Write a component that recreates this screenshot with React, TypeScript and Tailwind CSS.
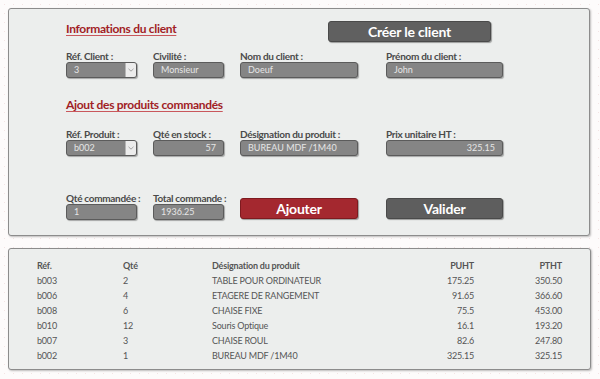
import React from "react";

const FONT = { fontFamily: "Lato, 'Open Sans', sans-serif" };

type Line = { ref: string; qte: string; des: string; puht: string; ptht: string };

const lines: Line[] = [
  { ref: "b003", qte: "2", des: "TABLE POUR ORDINATEUR", puht: "175.25", ptht: "350.50" },
  { ref: "b006", qte: "4", des: "ETAGERE DE RANGEMENT", puht: "91.65", ptht: "366.60" },
  { ref: "b008", qte: "6", des: "CHAISE FIXE", puht: "75.5", ptht: "453.00" },
  { ref: "b010", qte: "12", des: "Souris Optique", puht: "16.1", ptht: "193.20" },
  { ref: "b007", qte: "3", des: "CHAISE ROUL", puht: "82.6", ptht: "247.80" },
  { ref: "b002", qte: "1", des: "BUREAU MDF /1M40", puht: "325.15", ptht: "325.15" },
];

const Label = ({ children }: { children: React.ReactNode }) => (
  <div className="h-[11px] text-[10px] leading-[11px] font-bold text-[#4a4a4a] whitespace-nowrap tracking-[-0.3px]">
    {children}
  </div>
);

const Input = ({ value, right }: { value: string; right?: boolean }) => (
  <div
    className={`w-full h-[16px] rounded-[3px] border border-[#5b5b5b] bg-[#858585] shadow-[1px_1px_1px_rgba(0,0,0,0.3)] px-[7px] text-[9px] leading-[14px] text-[#e6e6e6] ${
      right ? "text-right" : ""
    }`}
  >
    {value}
  </div>
);

const Select = ({ value }: { value: string }) => (
  <div className="w-full h-[16px] rounded-[3px] border border-[#5b5b5b] bg-[#858585] shadow-[1px_1px_1px_rgba(0,0,0,0.3)] flex text-[9px] leading-[14px] text-[#e6e6e6] overflow-hidden">
    <div className="flex-1 pl-[7px]">{value}</div>
    <div className="w-[11px] h-full bg-[#ececec] border-l border-[#b5b5b5] flex items-center justify-center">
      <svg width="6" height="4" viewBox="0 0 6 4">
        <path d="M0.5 0.8 L3 3.2 L5.5 0.8" fill="none" stroke="#9a9a9a" strokeWidth="0.9" />
      </svg>
    </div>
  </div>
);

const Field = ({ label, children, className }: { label: string; children: React.ReactNode; className: string }) => (
  <div className={`flex flex-col shrink-0 ${className}`}>
    <Label>{label}</Label>
    {children}
  </div>
);

const Title = ({ children }: { children: React.ReactNode }) => (
  <div className="text-[12px] leading-[16px] font-bold text-[#a11d25] underline decoration-[#c9575c] underline-offset-2 tracking-[-0.3px]">
    {children}
  </div>
);

export default function App() {
  return (
    <div
      className="w-[600px] h-[379px] overflow-hidden bg-[#fdfbfb] bg-[radial-gradient(#f3e4e4_0.8px,transparent_0.8px)] bg-size-[9px_9px] pl-[8px] pt-[8px]"
      style={FONT}
    >
      {/* Formulaire */}
      <div className="w-[582px] h-[228px] rounded-[3px] border border-[#8c8c8c] bg-[#eceeed] shadow-[1px_1px_2px_rgba(0,0,0,0.25)] pl-[57px] pt-[12px]">
        <div className="flex h-[21px]">
          <Title>Informations du client</Title>
          <button className="ml-auto mr-[98px] w-[163px] h-[21px] rounded-[3px] border border-[#4a4a4a] bg-[#606060] shadow-[1px_1px_1px_rgba(0,0,0,0.35)] text-white text-[14px] font-bold leading-[19px] tracking-[-0.2px]">
            Créer le client
          </button>
        </div>

        <div className="flex mt-[9px]">
          <Field label="Réf. Client :" className="w-[71px]">
            <Select value="3" />
          </Field>
          <Field label="Civilité :" className="w-[71px] ml-[16px]">
            <Input value="Monsieur" />
          </Field>
          <Field label="Nom du client :" className="w-[118px] ml-[16px]">
            <Input value="Doeuf" />
          </Field>
          <Field label="Prénom du client :" className="w-[117px] ml-[28px]">
            <Input value="John" />
          </Field>
        </div>

        <div className="mt-[19px] flex">
          <Title>Ajout des produits commandés</Title>
        </div>

        <div className="flex mt-[16px]">
          <Field label="Réf. Produit :" className="w-[71px]">
            <Select value="b002" />
          </Field>
          <Field label="Qté en stock :" className="w-[71px] ml-[16px]">
            <Input value="57" right />
          </Field>
          <Field label="Désignation du produit :" className="w-[118px] ml-[16px]">
            <Input value="BUREAU MDF /1M40" />
          </Field>
          <Field label="Prix unitaire HT :" className="w-[117px] ml-[28px]">
            <Input value="325.15" right />
          </Field>
        </div>

        <div className="flex items-start mt-[37px]">
          <Field label="Qté commandée :" className="w-[71px]">
            <Input value="1" />
          </Field>
          <Field label="Total commande :" className="w-[71px] ml-[16px]">
            <Input value="1936.25" />
          </Field>
          <button className="shrink-0 ml-[16px] mt-[5px] w-[118px] h-[21px] rounded-[3px] border border-[#7e1a1f] bg-[#a4282f] shadow-[1px_1px_1px_rgba(0,0,0,0.35)] text-white text-[14px] font-bold leading-[19px] tracking-[-0.2px]">
            Ajouter
          </button>
          <button className="shrink-0 ml-[28px] mt-[5px] w-[117px] h-[21px] rounded-[3px] border border-[#4a4a4a] bg-[#5e5e5e] shadow-[1px_1px_1px_rgba(0,0,0,0.35)] text-white text-[14px] font-bold leading-[19px] tracking-[-0.2px]">
            Valider
          </button>
        </div>
      </div>

      {/* Lignes de commande */}
      <div className="mt-[12px] w-[583px] h-[122px] rounded-[3px] border border-[#8c8c8c] bg-[#eceeed] shadow-[1px_1px_2px_rgba(0,0,0,0.25)] pl-[28px] pt-[9px] text-[9px] leading-[15px] tracking-[-0.2px] text-[#555]">
        <div className="grid grid-cols-[86px_89px_200px_62px_88px] font-bold">
          <div>Réf.</div>
          <div>Qté</div>
          <div>Désignation du produit</div>
          <div className="text-right">PUHT</div>
          <div className="text-right">PTHT</div>
        </div>
        {lines.map((l) => (
          <div key={l.ref} className="grid grid-cols-[86px_89px_200px_62px_88px]">
            <div>{l.ref}</div>
            <div>{l.qte}</div>
            <div>{l.des}</div>
            <div className="text-right">{l.puht}</div>
            <div className="text-right">{l.ptht}</div>
          </div>
        ))}
      </div>
    </div>
  );
}
